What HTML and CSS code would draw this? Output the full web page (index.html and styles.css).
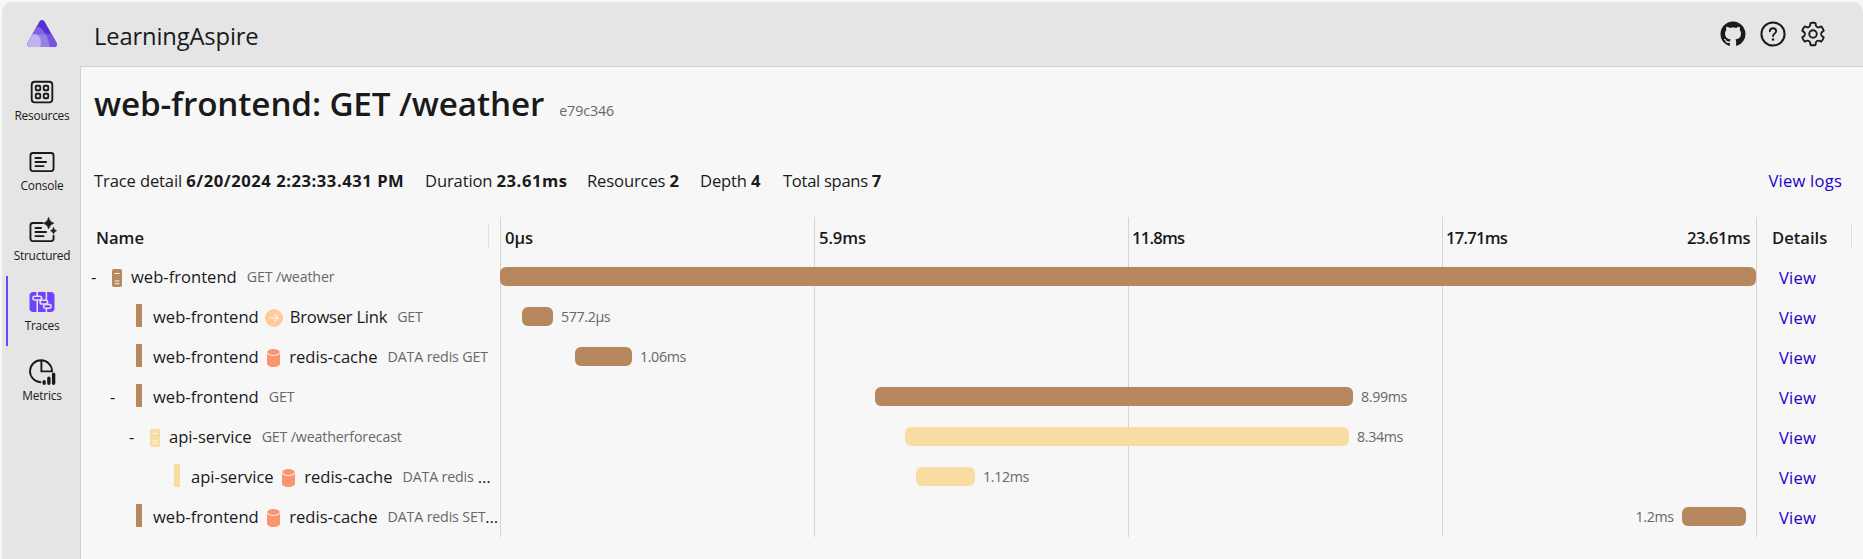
FILE: index.html
```
<!DOCTYPE html>
<html lang="en">
<head>
<meta charset="utf-8">
<title>LearningAspire traces</title>
<link rel="stylesheet" href="styles.css">
</head>
<body>
<svg class="defs" aria-hidden="true">
  <symbol id="server" viewBox="0 0 10 18"><rect width="10" height="18" rx="2" fill="currentColor"/><path d="M3 4.500h4M3 12h4M3 14.700h4" stroke="#f7f7f7" stroke-width="1" stroke-linecap="round"/></symbol>
  <symbol id="db" viewBox="0 0 13 18"><path d="M0 4.6C1.200 6.100 3.600 7 6.500 7S11.800 6.100 13 4.600V14.500C13 16.500 10.100 18 6.500 18S0 16.500 0 14.500Z" fill="currentColor"/><ellipse cx="6.500" cy="3" rx="6.200" ry="3" fill="currentColor"/></symbol>
  <symbol id="arrow" viewBox="0 0 18 18"><circle cx="9" cy="9" r="9" fill="currentColor"/><path d="M5 9h8M9.700 5.700L13 9l-3.300 3.300" fill="none" stroke="#f7f7f7" stroke-width="1.200" stroke-linecap="round" stroke-linejoin="round"/></symbol>
</svg>
<div class="app">
  <header class="topbar">
    <div class="logo">
      <svg width="30" height="27" viewBox="0 0 30 27">
        <defs><clipPath id="tri"><path d="M12.500 1.400Q15-1.300 17.500 1.400L29.600 23Q30.800 26.600 27 27H3Q-.8 26.600.4 23Z"/></clipPath></defs>
        <g clip-path="url(#tri)">
          <rect width="30" height="27" fill="#5530d6"/>
          <path d="M15 14H30V27H20Z" fill="#7455dd"/>
          <path d="M10.500 6.500Q14 7 16.500 11L18.500 14.200H5Z" fill="#7f64e0"/>
          <path d="M6 14.200H18.500Q22 19.500 22.500 27H6Z" fill="#9780e5"/>
          <path d="M0 27V14.200H9Q12.500 15.500 13.700 20Q14.500 24 13 27Z" fill="#c0b3f0"/>
        </g>
      </svg>
    </div>
    <div class="app-name">LearningAspire</div>
    <div class="tools">
      <svg width="30" height="30" viewBox="-1.600 -1.600 19.200 19.200"><path fill="#1a1a1a" d="M8 0C3.580 0 0 3.580 0 8c0 3.540 2.290 6.530 5.470 7.590.4.070.55-.17.55-.38 0-.19-.01-.82-.01-1.490-2.010.37-2.530-.49-2.690-.94-.09-.23-.48-.94-.82-1.130-.28-.15-.68-.52-.01-.53.63-.01 1.080.58 1.230.82.72 1.210 1.870.87 2.330.66.070-.52.28-.87.51-1.070-1.780-.2-3.640-.89-3.640-3.950 0-.87.31-1.590.82-2.150-.08-.2-.36-1.020.08-2.120 0 0 .67-.21 2.200.82.64-.18 1.320-.27 2-.27.68 0 1.360.09 2 .27 1.530-1.040 2.200-.82 2.200-.82.44 1.100.16 1.920.08 2.120.51.56.82 1.270.82 2.150 0 3.070-1.870 3.750-3.650 3.950.29.25.54.73.54 1.480 0 1.070-.01 1.930-.01 2.200 0 .21.15.46.55.38A8.013 8.013 0 0016 8c0-4.420-3.580-8-8-8z"/></svg>
      <svg width="30" height="30" viewBox="0 0 24 24"><circle cx="12" cy="12" r="9.250" fill="none" stroke="#1a1a1a" stroke-width="1.600"/><path d="M9.500 9.800C9.500 8.200 10.600 7.400 12 7.400S14.500 8.300 14.500 9.800C14.500 11.500 12 11.900 12 13.600" fill="none" stroke="#1a1a1a" stroke-width="1.500" stroke-linecap="round"/><circle cx="12" cy="16.300" r="1" fill="#1a1a1a"/></svg>
      <svg width="30" height="30" viewBox="0 0 24 24"><path fill="#1a1a1a" d="M12.010 2.250c.74 0 1.470.1 2.180.25.32.07.55.33.59.65l.17 1.530a1.380 1.380 0 0 0 1.920 1.110l1.400-.61c.3-.13.64-.06.85.17a9.800 9.800 0 0 1 2.200 3.800.78.78 0 0 1-.29.83l-1.250.92a1.380 1.380 0 0 0 0 2.220l1.250.92c.26.19.37.52.28.82a9.800 9.800 0 0 1-2.200 3.800.75.75 0 0 1-.85.18l-1.400-.62a1.380 1.380 0 0 0-1.930 1.120l-.17 1.520a.75.75 0 0 1-.58.65 9.520 9.520 0 0 1-4.400 0 .75.75 0 0 1-.57-.65l-.17-1.520a1.380 1.380 0 0 0-1.930-1.110l-1.400.62a.75.75 0 0 1-.85-.18 9.800 9.800 0 0 1-2.200-3.800.78.78 0 0 1 .28-.82l1.250-.92a1.380 1.380 0 0 0 0-2.220l-1.250-.92a.78.78 0 0 1-.28-.82 9.800 9.800 0 0 1 2.200-3.800c.21-.24.55-.31.85-.18l1.400.62c.4.17.86.15 1.250-.08.38-.22.63-.6.68-1.040l.17-1.530a.75.75 0 0 1 .58-.65c.72-.16 1.450-.24 2.190-.25Zm0 1.500c-.45 0-.9.04-1.350.12l-.11.97a2.890 2.890 0 0 1-4.030 2.330l-.9-.4A8.300 8.300 0 0 0 4.290 9.100l.8.59a2.880 2.880 0 0 1 0 4.640l-.8.59a8.300 8.300 0 0 0 1.350 2.320l.9-.4a2.880 2.880 0 0 1 4.020 2.330l.1.990c.9.150 1.800.150 2.700 0l.1-.99a2.880 2.880 0 0 1 4.020-2.320l.9.400a8.300 8.300 0 0 0 1.360-2.330l-.8-.59a2.880 2.880 0 0 1 0-4.640l.8-.59a8.300 8.300 0 0 0-1.350-2.320l-.9.400a2.880 2.880 0 0 1-4.020-2.320l-.11-.98c-.45-.08-.9-.12-1.340-.12ZM12 8.250a3.750 3.750 0 1 1 0 7.500 3.750 3.750 0 0 1 0-7.500Zm0 1.500a2.250 2.250 0 1 0 0 4.500 2.250 2.250 0 0 0 0-4.500Z"/></svg>
    </div>
  </header>
  <nav class="sidebar">
    <a class="nav-item"><svg width="30" height="30" viewBox="0 0 24 24" fill="none" stroke="#1a1a1a" stroke-width="1.500"><rect x="3.750" y="3.750" width="16.500" height="16.500" rx="2.500"/><rect x="7" y="7" width="3.600" height="3.600" rx=".8"/><rect x="13.400" y="7" width="3.600" height="3.600" rx=".8"/><rect x="7" y="13.400" width="3.600" height="3.600" rx=".8"/><rect x="13.400" y="13.400" width="3.600" height="3.600" rx=".8"/></svg><span>Resources</span></a>
    <a class="nav-item"><svg width="30" height="30" viewBox="0 0 24 24" fill="none" stroke="#1a1a1a" stroke-width="1.500" stroke-linecap="round"><rect x="2.750" y="4.750" width="18.500" height="14.500" rx="2"/><path d="M6.750 8.750h4.500M6.750 12h8.500M6.750 15.250h6.500"/></svg><span>Console</span></a>
    <a class="nav-item"><svg width="30" height="30" viewBox="0 0 24 24" fill="none" stroke="#1a1a1a" stroke-width="1.500" stroke-linecap="round"><path d="M12.300 4.750H4.750a2 2 0 0 0-2 2V17.250a2 2 0 0 0 2 2H19.250a2 2 0 0 0 2-2V15M6.750 8.750h4.500M6.750 12h8.500M6.750 15.250h6.500"/><path stroke="#1a1a1a" stroke-width=".5" stroke-linejoin="round" fill="#1a1a1a" d="M17.300.5Q18.200 4.100 21.500 5Q18.200 5.900 17.300 9.500Q16.400 5.900 13 5Q16.400 4.100 17.300.5ZM21.200 8.500Q21.700 10.500 23.600 11Q21.700 11.500 21.200 13.500Q20.700 11.500 18.800 11Q20.700 10.500 21.200 8.500Z"/></svg><span>Structured</span></a>
    <a class="nav-item active"><svg width="30" height="30" viewBox="0 0 24 24" fill="none"><rect x="2" y="4" width="20" height="16" rx="3" fill="#7042ff"/><g stroke="#e5e5e5" stroke-width="1.200" fill="#7042ff"><path d="M8.200 4V20M15.500 4V20"/><rect x="4.700" y="7.300" width="7" height="3" rx="1.500"/><rect x="10.500" y="10.600" width="6" height="3" rx="1.500"/><rect x="13.300" y="13.900" width="6" height="3" rx="1.500"/></g></svg><span>Traces</span></a>
    <a class="nav-item"><svg width="30" height="30" viewBox="0 0 24 24" fill="none" stroke="#1a1a1a"><path stroke-width="1.500" stroke-linecap="round" d="M10.800 20.200A8.800 8.800 0 1 1 20 11.500H11.500V3"/><path stroke-width="2.700" stroke-linecap="round" d="M13.700 19.800V21M17.500 17V21M21.300 13.700V21"/></svg><span>Metrics</span></a>
  </nav>
  <main class="content">
    <h1 class="title">web-frontend: GET /weather <span class="trace-id">e79c346</span></h1>
    <div class="summary">
      <div class="s-date"><span>Trace detail</span> <b>6/20/2024 2:23:33.431 PM</b></div>
      <div class="s-duration"><span>Duration</span> <b>23.61ms</b></div>
      <div class="s-resources"><span>Resources</span> <b>2</b></div>
      <div class="s-depth"><span>Depth</span> <b>4</b></div>
      <div class="s-spans"><span>Total spans</span> <b>7</b></div>
      <a class="link logs">View logs</a>
    </div>
    <div class="grid">
      <div class="row head">
        <div class="name-head">Name</div>
        <div class="chart ticks"><span>0µs</span><span>5.9ms</span><span class="tight">11.8ms</span><span class="tight last"><i>17.71ms</i><i class="end">23.61ms</i></span></div>
        <div class="details">Details</div>
      </div>
      <div class="row">
        <div class="name"><span class="toggle">-</span><svg class="server brown"><use href="#server"/></svg><span>web-frontend</span><span class="op">GET /weather</span></div>
        <div class="chart"><div class="bar brown-bg" style="width:100%"></div></div>
        <div class="details"><a class="link">View</a></div>
      </div>
      <div class="row">
        <div class="name d1"><span class="toggle"></span><span class="mark brown-bg"></span><span>web-frontend</span><svg class="arrow"><use href="#arrow"/></svg><span class="tight-name">Browser Link</span><span class="op">GET</span></div>
        <div class="chart"><div class="bar brown-bg" style="margin-left:1.750%;width:2.470%"></div><span class="time">577.2µs</span></div>
        <div class="details"><a class="link">View</a></div>
      </div>
      <div class="row">
        <div class="name d1"><span class="toggle"></span><span class="mark brown-bg"></span><span>web-frontend</span><svg class="db"><use href="#db"/></svg><span>redis-cache</span><span class="op">DATA redis GET</span></div>
        <div class="chart"><div class="bar brown-bg" style="margin-left:5.970%;width:4.540%"></div><span class="time">1.06ms</span></div>
        <div class="details"><a class="link">View</a></div>
      </div>
      <div class="row">
        <div class="name d1"><span class="toggle">-</span><span class="mark brown-bg"></span><span>web-frontend</span><span class="op">GET</span></div>
        <div class="chart"><div class="bar brown-bg" style="margin-left:29.860%;width:38.060%"></div><span class="time">8.99ms</span></div>
        <div class="details"><a class="link">View</a></div>
      </div>
      <div class="row">
        <div class="name d2"><span class="toggle">-</span><svg class="server yellow"><use href="#server"/></svg><span>api-service</span><span class="op">GET /weatherforecast</span></div>
        <div class="chart"><div class="bar yellow-bg" style="margin-left:32.250%;width:35.350%"></div><span class="time">8.34ms</span></div>
        <div class="details"><a class="link">View</a></div>
      </div>
      <div class="row">
        <div class="name d3"><span class="toggle"></span><span class="mark yellow-bg"></span><span>api-service</span><svg class="db"><use href="#db"/></svg><span>redis-cache</span><span class="op">DATA redis</span><span class="more spaced">…</span></div>
        <div class="chart"><div class="bar yellow-bg" style="margin-left:33.120%;width:4.700%"></div><span class="time">1.12ms</span></div>
        <div class="details"><a class="link">View</a></div>
      </div>
      <div class="row">
        <div class="name d1"><span class="toggle"></span><span class="mark brown-bg"></span><span>web-frontend</span><svg class="db"><use href="#db"/></svg><span>redis-cache</span><span class="op">DATA redis SET</span><span class="more">…</span></div>
        <div class="chart from-end"><span class="time">1.2ms</span><div class="bar brown-bg" style="width:5.100%;margin-right:.820%"></div></div>
        <div class="details"><a class="link">View</a></div>
      </div>
    </div>
  </main>
</div>
</body>
</html>
```
FILE: styles.css
```
* { box-sizing: border-box; }
body {
  margin: 0;
  height: 559px;
  padding: 2px 0 0 2px;
  overflow: hidden;
  background: #f7f7f7;
  color: #1a1a1a;
  font: 16.6px/24px "Open Sans", "Noto Sans", sans-serif;
}
svg { display: block; flex: none; }
.defs { position: absolute; width: 0; height: 0; }
.app {
  height: 557px;
  display: grid;
  grid-template: 64px 1fr / 78px 1fr;
  background: #e5e5e5;
  border-radius: 11px 11px 0 0;
}
.topbar {
  grid-column: 1 / 3;
  display: grid;
  grid-template-columns: 92px 1fr auto;
  align-items: center;
  padding: 0 35px 0 0;
}
.logo { padding: 0 0 1px 25px; }
.app-name { font-size: 23.75px; line-height: 32px; padding-top: 4px; letter-spacing: -.15px; }
.tools { display: flex; gap: 10px; }

.sidebar { display: flex; flex-direction: column; }
.nav-item {
  position: relative;
  height: 70px;
  padding: 11px 0 0 2px;
  display: flex;
  flex-direction: column;
  align-items: center;
  font-size: 11.9px;
  line-height: 16px;
  letter-spacing: -.22px;
}
.active::before {
  content: "";
  position: absolute;
  left: 4px;
  top: 0;
  width: 2px;
  height: 70px;
  background: #7042ff;
}

.content {
  background: #f7f7f7;
  border: solid #d0d0d0;
  border-width: 1px 0 0 1px;
  padding-left: 7px;
}
.title {
  margin: 0;
  padding: 12px 0 0 6px;
  height: 94px;
  display: flex;
  align-items: baseline;
  gap: 15px;
  font-size: 33.25px;
  line-height: 48px;
  font-weight: 600;
  letter-spacing: -.14px;
}
.trace-id { font-size: 14.25px; font-weight: 400; color: #686868; letter-spacing: -.07px; }
.summary { height: 56px; padding: 8px 21px 0 6px; display: flex; }
.summary div { white-space: nowrap; letter-spacing: -.14px; }
.summary b { letter-spacing: .55px; }
.s-date { width: 331px; }
.s-duration { width: 162px; }
.s-resources { width: 113px; }
.s-depth { width: 83px; }
.summary .s-spans { letter-spacing: -.3px; }
.link { color: #2200c8; letter-spacing: .2px; }
.logs { margin-left: auto; }

.row { height: 40px; display: grid; grid-template-columns: 412px 1256px 1fr; }
.head { font-weight: 600; line-height: 41px; }
.name-head {
  padding-left: 8px;
  background: linear-gradient(#e0e0e0, #e0e0e0) 400px 7px / 1px 25px no-repeat;
}
.chart {
  display: flex;
  align-items: center;
  background: repeating-linear-gradient(to right, #d5d5d5 0 1px, transparent 1px 314px);
}
.ticks span { flex: 0 0 314px; padding-left: 5px; letter-spacing: -.1px; }
.ticks .tight { letter-spacing: -.75px; padding-left: 4px; }
.ticks .last { display: flex; justify-content: space-between; padding-right: 6px; }
.ticks i { font-style: normal; }
.ticks .end { letter-spacing: -.5px; }
.details { border-left: 1px solid #d5d5d5; padding: 9px 0 0 22px; }
.head .details {
  padding: 0 0 0 15px;
  background: linear-gradient(#e0e0e0, #e0e0e0) 94px 7px / 1px 25px no-repeat;
}
.name { display: flex; align-items: center; white-space: nowrap; padding-bottom: 1px; }
.name > * { flex-shrink: 0; }
.d1 { padding-left: 19px; }
.d2 { padding-left: 38px; }
.d3 { padding-left: 57px; }
.toggle { width: 24px; padding-left: 3px; }
.server { width: 10px; height: 18px; margin: 2px 9px 0 0; }
.mark { width: 6px; height: 23px; margin: -2px 11px 0 5px; }
.arrow { width: 18px; height: 18px; margin: 2px 7px 0 6px; color: #ffcb99; }
.db { width: 13px; height: 18px; margin: 2px 9px 0 8.500px; color: #fb9470; }
.tight-name { letter-spacing: -.25px; }
.op { margin-left: 10px; font-size: 14.25px; color: #686868; letter-spacing: -.17px; }
.more { margin-left: 0; }
.spaced { margin-left: 4px; }
.bar { height: 19px; border-radius: 6px; flex: none; margin-bottom: 1px; }
.time { margin: 0 8px; font-size: 14.25px; color: #686868; letter-spacing: -.38px; }
.from-end { justify-content: flex-end; }
.brown { color: #b7875d; }
.yellow { color: #f9dca2; }
.brown-bg { background: #b7875d; }
.yellow-bg { background: #f9dca2; }
```
